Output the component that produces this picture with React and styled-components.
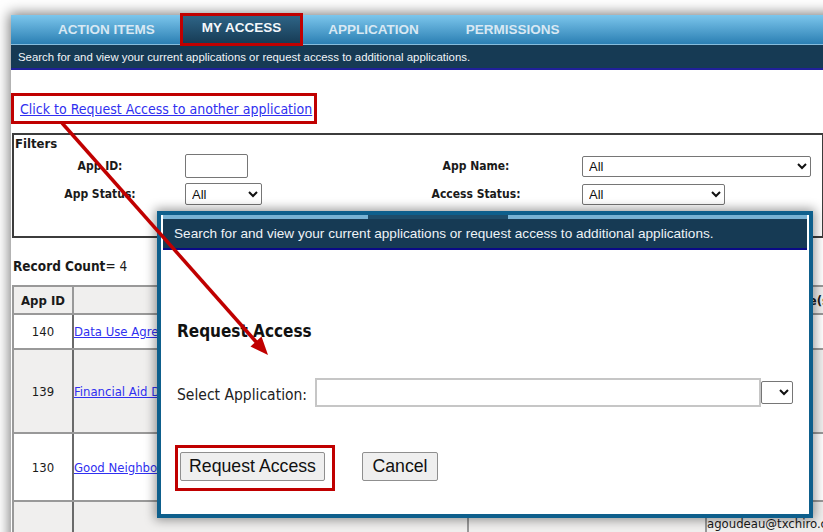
import React from "react";
import styled, { createGlobalStyle, css } from "styled-components";

const GlobalStyle = createGlobalStyle`
  html, body {
    margin: 0;
    padding: 0;
    background: #fff;
  }
  body {
    font-family: "DejaVu Sans", Tahoma, sans-serif;
    color: #1a1a1a;
  }
`;

const Shot = styled.div`
  position: relative;
  box-sizing: border-box;
  width: 823px;
  height: 532px;
  padding: 15px 0 0 11px;
  overflow: hidden;
  background: #fff;
`;

const Page = styled.div`
  width: 1000px;
  height: 540px;
  background: #fff;
  box-shadow: -2px -2px 12px rgba(0, 0, 0, 0.5);
`;

const Nav = styled.nav`
  display: flex;
  height: 29px;
  padding-left: 23.5px;
  background: linear-gradient(#7cc6ec, #2b7fb3);
  border-bottom: 1px solid #86bcdc;
`;

const Tab = styled.div`
  display: flex;
  align-items: center;
  padding: 0 23.5px;
  font: bold 13.5px "Liberation Sans", Arial, sans-serif;
  color: #d8e8f3;
  ${(p) =>
    p.$active &&
    css`
      margin: 0 3.5px;
      padding: 0 20px 5px;
      background: linear-gradient(#2f6688, #163a54);
      outline: 3px solid #c00000;
      outline-offset: -1px;
      color: #f4f8fb;
    `}
`;

const SubBar = styled.div`
  display: flex;
  align-items: center;
  height: 23px;
  padding-left: 7px;
  background: #163a54;
  border-bottom: 2px solid #20209a;
  font: 11.4px "Liberation Sans", Arial, sans-serif;
  color: #f2f5f8;
`;

const Content = styled.div`
  display: flex;
  flex-direction: column;
  align-items: flex-start;
`;

const Callout = styled.div`
  margin-top: 23px;
  padding: 0 2px 0 6px;
  height: 25px;
  display: flex;
  align-items: center;
  border: 3px solid #c00000;
`;

const Link = styled.a`
  color: #3030f0;
  text-decoration: underline;
  font-size: ${(p) => p.$size || 13}px;
  font-stretch: condensed;
  white-space: nowrap;
  cursor: pointer;
`;

const Filters = styled.div`
  box-sizing: border-box;
  width: 812px;
  height: 105px;
  margin: 9px 0 0 1px;
  padding: 1px 0 0 1px;
  border: 2px solid #3c3c3c;
`;

const FiltersTitle = styled.div`
  font-weight: bold;
  font-size: 13px;
  font-stretch: condensed;
  line-height: 16px;
`;

const FilterGrid = styled.div`
  display: grid;
  grid-template-columns: 170px 211px 160px 1fr;
  grid-template-rows: 24px 22px;
  row-gap: 5px;
  align-items: center;
  margin-top: 2px;
`;

const Label = styled.div`
  text-align: center;
  font-weight: bold;
  font-size: 12px;
  font-stretch: condensed;
`;

const Field = styled.div`
  display: flex;
  align-items: center;
  padding-left: ${(p) => p.$indent || 0}px;
`;

const TextBox = styled.input`
  box-sizing: border-box;
  width: ${(p) => p.$w}px;
  height: ${(p) => p.$h}px;
  border: 1px solid #767676;
  border-radius: 2px;
  background: #fff;
`;

const Select = styled.select`
  box-sizing: border-box;
  width: ${(p) => p.$w}px;
  height: ${(p) => p.$h}px;
  padding: 0 2px;
  border: 1px solid #767676;
  border-radius: 2px;
  background: #fff;
  color: #111;
  font: 13px "Liberation Sans", Arial, sans-serif;
`;

const RecordCount = styled.div`
  margin: 20px 0 0 2px;
  font-size: 13.5px;
  font-stretch: condensed;
  line-height: 16px;
  b {
    font-weight: bold;
  }
`;

const Table = styled.table`
  margin: 11px 0 0 1px;
  border-collapse: collapse;
  table-layout: fixed;
  width: 852px;
  font-size: 13px;
  font-stretch: condensed;
`;

const Row = styled.tr`
  height: ${(p) => p.$h}px;
  background: ${(p) => (p.$shade ? "#f0efee" : "#fff")};
`;

const Head = styled.th`
  border: 2px solid #999;
  font-weight: bold;
  text-align: center;
  vertical-align: middle;
  padding: 0;
  white-space: nowrap;
`;

const Cell = styled.td`
  border: 2px solid #999;
  border-right-color: ${(p) => (p.$dark ? "#6a6a6a" : "#999")};
  padding: ${(p) => (p.$top ? "14px 0 0 0" : "0")};
  text-align: ${(p) => (p.$center ? "center" : "left")};
  vertical-align: ${(p) => (p.$top ? "top" : "middle")};
  white-space: nowrap;
  overflow: hidden;
`;

const Modal = styled.div`
  position: absolute;
  left: 157px;
  top: 211px;
  box-sizing: border-box;
  width: 656px;
  height: 307px;
  padding: 0 2px;
  border: 4px solid #0e5f8c;
  background: #fff;
  box-shadow: 0 0 10px 2px rgba(0, 0, 0, 0.4);
  display: flex;
  flex-direction: column;
`;

const ModalStrip = styled.div`
  height: 4px;
  background: linear-gradient(
    90deg,
    #78b2d4 0,
    #78b2d4 205px,
    #1d4c6a 205px,
    #1d4c6a 345px,
    #78b2d4 345px
  );
`;

const ModalBar = styled.div`
  display: flex;
  align-items: center;
  height: 29px;
  padding-left: 11px;
  background: #163a54;
  border-bottom: 2px solid #0a0a86;
  font: 13.6px "Liberation Sans", Arial, sans-serif;
  color: #eef3f7;
`;

const ModalBody = styled.div`
  display: flex;
  flex-direction: column;
  align-items: flex-start;
  padding-left: 12px;
`;

const Heading = styled.h2`
  margin: 71px 0 0 2px;
  font-size: 17px;
  font-weight: bold;
  font-stretch: condensed;
  line-height: 20px;
  color: #111;
`;

const PickRow = styled.div`
  display: flex;
  align-items: center;
  margin: 37px 0 0 2px;
`;

const PickLabel = styled.label`
  font-size: 15.5px;
  font-stretch: condensed;
  color: #222;
  margin-right: 8px;
  padding-top: 4px;
`;

const PickInput = styled.input`
  box-sizing: border-box;
  width: 446px;
  height: 29px;
  border: 2px solid #c6c6c6;
  background: #fff;
`;

const Actions = styled.div`
  display: flex;
  align-items: flex-start;
  margin-top: 38px;
`;

const Highlight = styled.div`
  padding: 4px 7px 7px 2px;
  border: 3px solid #c00000;
`;

const Button = styled.button`
  box-sizing: border-box;
  width: ${(p) => p.$w}px;
  height: 29px;
  margin: ${(p) => (p.$gap ? "7px 0 0 27px" : "0")};
  padding: 0;
  border: 1px solid #8f8f8f;
  border-radius: 2px;
  background: #efefef;
  color: #111;
  font: 17.7px "Liberation Sans", Arial, sans-serif;
`;

const Overlay = styled.svg`
  position: absolute;
  left: 0;
  top: 0;
  pointer-events: none;
`;

const tabs = ["ACTION ITEMS", "MY ACCESS", "APPLICATION", "PERMISSIONS"];
const note =
  "Search for and view your current applications or request access to additional applications.";

const apps = [
  { id: "140", name: "Data Use Agreement", h: 35 },
  { id: "139", name: "Financial Aid Data Request", h: 84 },
  { id: "130", name: "Good Neighbor Program", h: 68 },
  { id: "", name: "", h: 40, email: "agoudeau@txchiro.com" },
];

export default function App() {
  return (
    <>
      <GlobalStyle />
      <Shot>
        <Page>
          <Nav>
            {tabs.map((t) => (
              <Tab key={t} $active={t === "MY ACCESS"}>
                {t}
              </Tab>
            ))}
          </Nav>
          <SubBar>{note}</SubBar>
          <Content>
            <Callout>
              <Link $size={14}>Click to Request Access to another application</Link>
            </Callout>
            <Filters>
              <FiltersTitle>Filters</FiltersTitle>
              <FilterGrid>
                <Label>App ID:</Label>
                <Field>
                  <TextBox $w={63} $h={24} />
                </Field>
                <Label>App Name:</Label>
                <Field $indent={26}>
                  <Select $w={229} $h={21} defaultValue="All">
                    <option>All</option>
                  </Select>
                </Field>
                <Label>App Status:</Label>
                <Field>
                  <Select $w={77} $h={22} defaultValue="All">
                    <option>All</option>
                  </Select>
                </Field>
                <Label>Access Status:</Label>
                <Field $indent={26}>
                  <Select $w={143} $h={21} defaultValue="All">
                    <option>All</option>
                  </Select>
                </Field>
              </FilterGrid>
            </Filters>
            <RecordCount>
              <b>Record Count</b>= 4
            </RecordCount>
            <Table>
              <colgroup>
                <col style={{ width: 60 }} />
                <col style={{ width: 395 }} />
                <col style={{ width: 238 }} />
                <col style={{ width: 159 }} />
              </colgroup>
              <thead>
                <Row $h={28} $shade>
                  <Head>App ID</Head>
                  <Head>Application Name</Head>
                  <Head>Status</Head>
                  <Head>Access Date(s)</Head>
                </Row>
              </thead>
              <tbody>
                {apps.map((a, i) => (
                  <Row key={i} $h={a.h} $shade={i % 2 === 1}>
                    <Cell $center $dark>
                      {a.id}
                    </Cell>
                    <Cell>{a.name && <Link>{a.name}</Link>}</Cell>
                    <Cell />
                    <Cell $top={!!a.email}>{a.email}</Cell>
                  </Row>
                ))}
              </tbody>
            </Table>
          </Content>
        </Page>

        <Modal>
          <ModalStrip />
          <ModalBar>{note}</ModalBar>
          <ModalBody>
            <Heading>Request Access</Heading>
            <PickRow>
              <PickLabel>Select Application:</PickLabel>
              <PickInput />
              <Select $w={32} $h={23} />
            </PickRow>
            <Actions>
              <Highlight>
                <Button $w={145}>Request Access</Button>
              </Highlight>
              <Button $w={76} $gap>
                Cancel
              </Button>
            </Actions>
          </ModalBody>
        </Modal>

        <Overlay width="823" height="532" viewBox="0 0 823 532">
          <line x1="62" y1="123" x2="258" y2="344" stroke="#c00000" strokeWidth="3.5" />
          <polygon points="268,355 250.5,346.5 261.5,336.5" fill="#c00000" />
        </Overlay>
      </Shot>
    </>
  );
}
